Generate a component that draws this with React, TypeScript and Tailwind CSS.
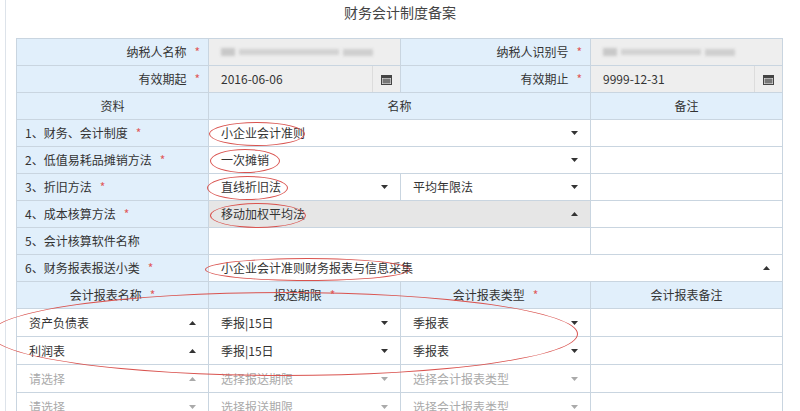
import React from 'react';

const Star = () => <span className="text-[#e05a5a] ml-2">*</span>;

const Caret = ({ up, light }: { up?: boolean; light?: boolean }) => (
  <svg width="7" height="4" viewBox="0 0 7 4" className={light ? 'text-[#aaa]' : 'text-[#333]'}>
    <path d={up ? 'M0 4L3.5 0L7 4Z' : 'M0 0L3.5 4L7 0Z'} fill="currentColor" />
  </svg>
);

const Cal = () => (
  <svg width="11" height="11" viewBox="0 0 11 11" className="text-[#444]">
    <rect x="0" y="1" width="11" height="10" fill="currentColor" />
    <rect x="1" y="4" width="9" height="6" fill="#eee" />
    <rect x="1.5" y="4.5" width="8" height="5" fill="currentColor" opacity="0.7" />
  </svg>
);

const Sel = ({ text, up, placeholder, gray }: { text: string; up?: boolean; placeholder?: boolean; gray?: boolean }) => (
  <div className={`h-full flex items-center justify-between pl-3 pr-[12px] ${gray ? 'bg-[#e6e6e6]' : 'bg-white'}`}>
    <span className={placeholder ? 'text-[#aaa]' : 'text-[#333]'}>{text}</span>
    <Caret up={up} light={placeholder} />
  </div>
);

const td = 'border border-[#c9d5e0] h-[27px] p-0';
const lab = `${td} bg-[#e1effb] text-[#333]`;

const Ellipse = ({ x, y, w, h }: { x: number; y: number; w: number; h: number }) => (
  <div className="absolute border border-[#d9534f] rounded-[50%] pointer-events-none" style={{ left: x, top: y, width: w, height: h }} />
);

const Blur = ({ w }: { w: number }) => (
  <div className="flex items-center gap-1 px-3 h-full blur-[1.5px]">
    <span className="h-[8px] w-[14px] bg-[#c8c8c8]" />
    <span className="h-[6px] bg-[#d2d2d2]" style={{ width: w }} />
    <span className="h-[7px] w-[30px] bg-[#cfcfcf]" />
  </div>
);

export default function App() {
  const rows = [
    ['资产负债表', '季报|15日', '季报表', false],
    ['利润表', '季报|15日', '季报表', false],
    ['请选择', '选择报送期限', '选择会计报表类型', true],
    ['请选择', '选择报送期限', '选择会计报表类型', true],
  ] as const;
  return (
    <div className="w-[800px] h-[411px] overflow-hidden bg-white relative text-[12px]" style={{ fontFamily: '"Microsoft YaHei","Noto Sans CJK SC",sans-serif' }}>
      <div className="absolute left-[5px] top-0 bottom-0 border-l border-[#dde3ea]" />
      <div className="text-center text-[14px] text-[#444] pt-[2px] h-[38px]">财务会计制度备案</div>
      <table className="ml-[16px] w-[766px] border-collapse table-fixed">
        <colgroup>
          <col className="w-[192px]" />
          <col className="w-[192px]" />
          <col className="w-[190px]" />
          <col className="w-[192px]" />
        </colgroup>
        <tbody>
          <tr>
            <td className={`${lab} text-right pr-2`}>纳税人名称<Star /></td>
            <td className={`${td} bg-[#eeeeee]`}><Blur w={100} /></td>
            <td className={`${lab} text-right pr-2`}>纳税人识别号<Star /></td>
            <td className={`${td} bg-[#eeeeee]`}><Blur w={80} /></td>
          </tr>
          <tr>
            <td className={`${lab} text-right pr-2`}>有效期起<Star /></td>
            <td className={`${td} bg-[#eeeeee]`}>
              <div className="flex h-full items-center"><span className="flex-1 px-3 text-[#333]">2016-06-06</span><span className="w-[28px] h-full flex items-center justify-center border-l border-[#dcdcdc]"><Cal /></span></div>
            </td>
            <td className={`${lab} text-right pr-2`}>有效期止<Star /></td>
            <td className={`${td} bg-[#eeeeee]`}>
              <div className="flex h-full items-center"><span className="flex-1 px-3 text-[#333]">9999-12-31</span><span className="w-[28px] h-full flex items-center justify-center border-l border-[#dcdcdc]"><Cal /></span></div>
            </td>
          </tr>
          <tr>
            <td className={`${lab} text-center`}>资料</td>
            <td colSpan={2} className={`${lab} text-center`}>名称</td>
            <td className={`${lab} text-center`}>备注</td>
          </tr>
          <tr>
            <td className={`${lab} pl-2`}>1、财务、会计制度<Star /></td>
            <td colSpan={2} className={td}><Sel text="小企业会计准则" /></td>
            <td className={td} />
          </tr>
          <tr>
            <td className={`${lab} pl-2`}>2、低值易耗品摊销方法<Star /></td>
            <td colSpan={2} className={td}><Sel text="一次摊销" /></td>
            <td className={td} />
          </tr>
          <tr>
            <td className={`${lab} pl-2`}>3、折旧方法<Star /></td>
            <td className={td}><Sel text="直线折旧法" /></td>
            <td className={td}><Sel text="平均年限法" /></td>
            <td className={td} />
          </tr>
          <tr>
            <td className={`${lab} pl-2`}>4、成本核算方法<Star /></td>
            <td colSpan={2} className={`${td} border-[#888]`}><Sel text="移动加权平均法" up gray /></td>
            <td className={td} />
          </tr>
          <tr>
            <td className={`${lab} pl-2`}>5、会计核算软件名称</td>
            <td colSpan={2} className={td} />
            <td className={td} />
          </tr>
          <tr>
            <td className={`${lab} pl-2`}>6、财务报表报送小类<Star /></td>
            <td colSpan={3} className={td}><Sel text="小企业会计准则财务报表与信息采集" up /></td>
          </tr>
          <tr>
            <td className={`${lab} text-center`}>会计报表名称<Star /></td>
            <td className={`${lab} text-center`}>报送期限<Star /></td>
            <td className={`${lab} text-center`}>会计报表类型<Star /></td>
            <td className={`${lab} text-center`}>会计报表备注</td>
          </tr>
          {rows.map(([a, b, c, ph], i) => (
            <tr key={i}>
              <td className={`${td} h-[28px]`}><Sel text={a} up={i < 3} placeholder={ph} /></td>
              <td className={`${td} h-[28px]`}><Sel text={b} placeholder={ph} /></td>
              <td className={`${td} h-[28px]`}><Sel text={c} placeholder={ph} /></td>
              <td className={`${td} h-[28px]`} />
            </tr>
          ))}
        </tbody>
      </table>
      <Ellipse x={209} y={122} w={96} h={24} />
      <Ellipse x={210} y={149} w={70} h={24} />
      <Ellipse x={207} y={176} w={81} h={24} />
      <Ellipse x={210} y={203} w={96} h={25} />
      <Ellipse x={205} y={258} w={205} h={23} />
      <Ellipse x={-10} y={292} w={588} h={84} />
    </div>
  );
}
